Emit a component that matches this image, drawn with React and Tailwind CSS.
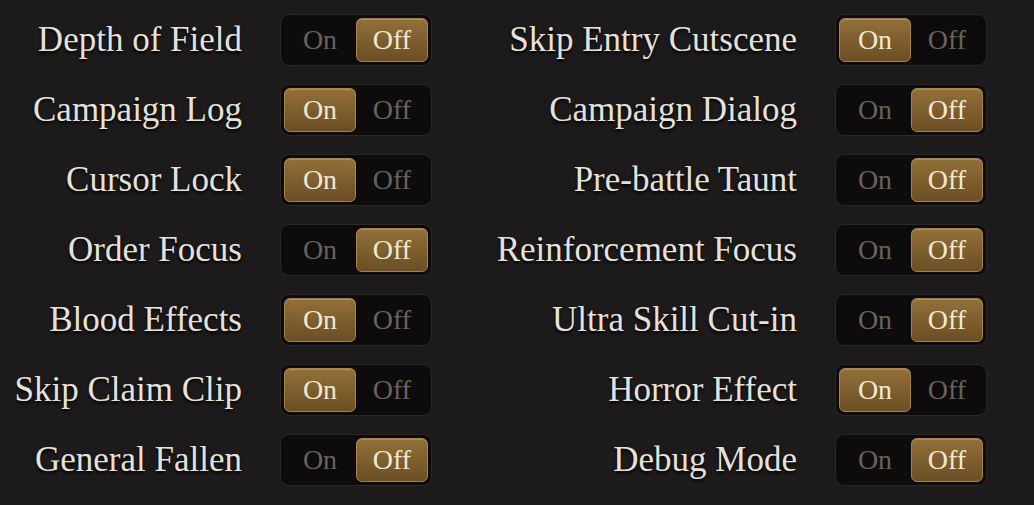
import { useState } from 'react';

const LEFT = [
  ['Depth of Field', false],
  ['Campaign Log', true],
  ['Cursor Lock', true],
  ['Order Focus', false],
  ['Blood Effects', true],
  ['Skip Claim Clip', true],
  ['General Fallen', false],
];

const RIGHT = [
  ['Skip Entry Cutscene', true],
  ['Campaign Dialog', false],
  ['Pre-battle Taunt', false],
  ['Reinforcement Focus', false],
  ['Ultra Skill Cut-in', false],
  ['Horror Effect', true],
  ['Debug Mode', false],
];

const serif = { fontFamily: '"Liberation Serif", "DejaVu Serif", serif' };

const Half = ({ label, active, onClick }) => (
  <button
    onClick={onClick}
    className={
      active
        ? 'w-[72px] h-[44px] rounded-[6px] border border-[#a5834c] bg-gradient-to-b from-[#927039] to-[#6b4e24] text-[#f1e7d2] text-[28px] leading-none shadow-[inset_0_1px_0_rgba(255,230,170,0.25)]'
        : 'w-[72px] h-[44px] rounded-[6px] text-[#67625d] text-[28px] leading-none'
    }
    style={serif}
  >
    {label}
  </button>
);

const Toggle = ({ value, onChange }) => (
  <div className="w-[152px] h-[52px] rounded-[9px] border border-[#2b2826] bg-[#0d0b0b] p-[3px] flex items-center">
    <Half label="On" active={value} onClick={() => onChange(true)} />
    <Half label="Off" active={!value} onClick={() => onChange(false)} />
  </div>
);

const Column = ({ items, labelW }) => {
  const [vals, setVals] = useState(items.map((i) => i[1]));
  return (
    <div className="flex flex-col">
      {items.map(([name], i) => (
        <div key={name} className="h-[70px] flex items-center">
          <div
            className="text-right text-[35px] text-[#e5e1dc] leading-none pb-[2px] [text-shadow:0_2px_3px_#000]"
            style={{ ...serif, width: labelW }}
          >
            {name}
          </div>
          <div className="ml-[38px]">
            <Toggle
              value={vals[i]}
              onChange={(v) => setVals(vals.map((x, j) => (j === i ? v : x)))}
            />
          </div>
        </div>
      ))}
    </div>
  );
};

export default function App() {
  return (
    <div className="w-[1034px] h-[505px] bg-[#1c1a1a] pt-[5px] flex">
      <Column items={LEFT} labelW={242} />
      <Column items={RIGHT} labelW={365} />
    </div>
  );
}
